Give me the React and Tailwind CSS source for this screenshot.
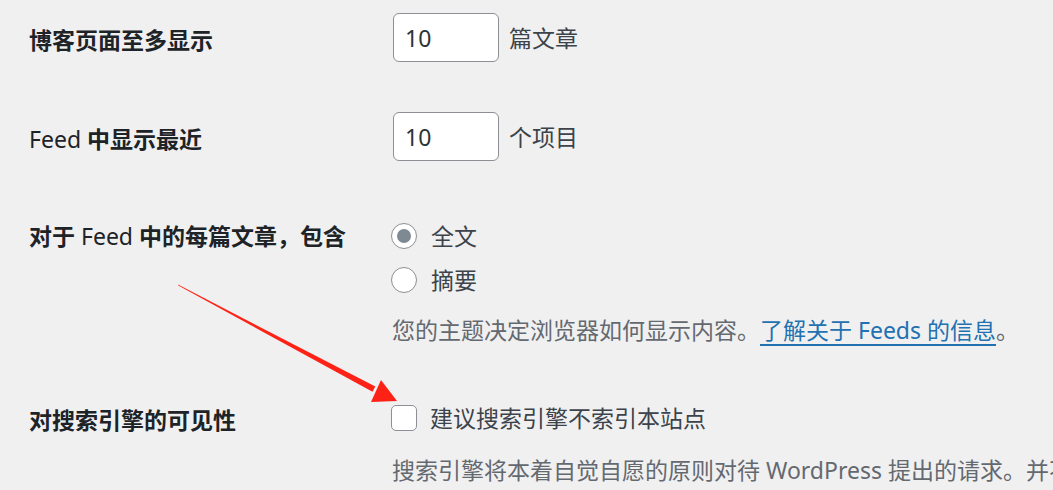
const font = { fontFamily: '"Noto Sans", "Noto Sans CJK SC", sans-serif' }

function Label({ children, className = '' }) {
  return (
    <div className={`w-[363px] shrink-0 text-[23px] leading-[30px] font-bold text-[#1d2327] ${className}`}>
      {children}
    </div>
  )
}

function NumberField({ value, unit }) {
  return (
    <div className="flex items-baseline gap-[10px] pl-px">
      <input
        type="text"
        defaultValue={value}
        className="w-[106px] h-[49px] bg-white border border-[#8c8f94] rounded-[6px] pl-[11px] text-[23px] text-[#2c3338] outline-none"
      />
      <span className="text-[23px] text-[#3c434a]">{unit}</span>
    </div>
  )
}

function Radio({ checked, label }) {
  return (
    <label className="flex items-center gap-[14px] h-[44px] -ml-px">
      <span className="w-[26px] h-[26px] rounded-full bg-white border border-[#8c8f94] flex items-center justify-center">
        {checked && <span className="w-[14px] h-[14px] rounded-full bg-[#7e8993]" />}
      </span>
      <span className="text-[23px] text-[#3c434a]">{label}</span>
    </label>
  )
}

export default function App() {
  return (
    <div className="relative h-[490px] w-[1053px] overflow-hidden bg-[#f0f0f1] pl-[29px]" style={font}>
      {/* 博客页面至多显示 */}
      <div className="flex h-[99px] pt-[13px]">
        <Label className="pt-[12px]">博客页面至多显示</Label>
        <NumberField value="10" unit="篇文章" />
      </div>

      {/* Feed 中显示最近 */}
      <div className="flex h-[99px] pt-[13px]">
        <Label className="pt-[12px]">
          <span className="font-normal">Feed</span> 中显示最近
        </Label>
        <NumberField value="10" unit="个项目" />
      </div>

      {/* 每篇文章包含 */}
      <div className="flex">
        <Label className="pt-[23px]">
          对于 <span className="font-normal">Feed</span> 中的每篇文章，包含
        </Label>
        <div className="flex flex-col pt-[16px]">
          <Radio checked label="全文" />
          <Radio label="摘要" />
          <p className="mt-[11px] text-[23px] leading-[34px] text-[#646970] whitespace-nowrap">
            您的主题决定浏览器如何显示内容。
            <a href="#" className="text-[#2271b1] underline decoration-[2px] underline-offset-[5px]">
              了解关于 Feeds 的信息
            </a>
            。
          </p>
        </div>
      </div>

      {/* 搜索引擎可见性 */}
      <div className="flex">
        <Label className="pt-[58px]">对搜索引擎的可见性</Label>
        <div className="flex flex-col pt-[49px]">
          <label className="flex items-center gap-[13px] h-[44px] -ml-px">
            <span className="w-[26px] h-[26px] rounded-[5px] bg-white border border-[#8c8f94]" />
            <span className="text-[23px] text-[#3c434a]">建议搜索引擎不索引本站点</span>
          </label>
          <p className="mt-[13px] text-[23px] leading-[34px] text-[#646970] whitespace-nowrap">
            搜索引擎将本着自觉自愿的原则对待 WordPress 提出的请求。并不是所有搜索引擎都会遵守这类请求。
          </p>
        </div>
      </div>

      {/* annotation arrow */}
      <svg className="absolute inset-0 pointer-events-none" width="1053" height="490" viewBox="0 0 1053 490">
        <polygon points="178,284.6 178.3,285.4 372.5,391.8 375.3,386.6" fill="#fe2216" />
        <polygon points="397,401 381,380 371,402" fill="#fe2216" />
      </svg>
    </div>
  )
}
